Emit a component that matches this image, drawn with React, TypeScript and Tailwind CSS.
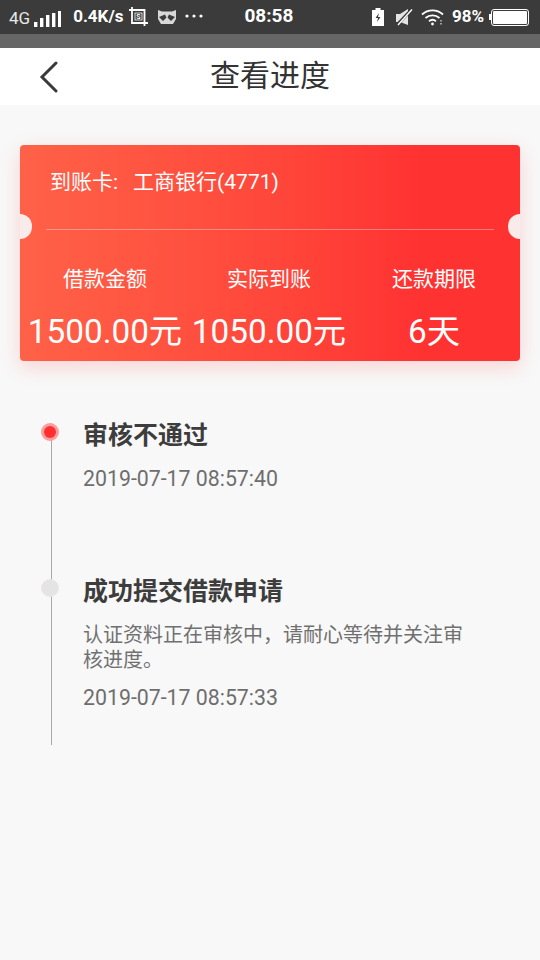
import React from 'react';

function SignalBars() {
    return (
        <svg width="27" height="18" viewBox="0 0 27 18" fill="white">
            <rect x="0" y="13" width="3.4" height="5" />
            <rect x="6" y="9" width="3.4" height="9" />
            <rect x="12" y="6" width="3.4" height="12" />
            <rect x="18" y="4" width="3.4" height="14" />
            <rect x="24" y="2" width="3.4" height="16" />
        </svg>
    );
}

function ScreenshotIcon() {
    return (
        <svg width="19" height="20" viewBox="0 0 19 20" fill="none" stroke="white" strokeWidth="1.8">
            <path d="M3 0v16h16M0 3h15.5v16" />
            <rect x="6" y="6" width="7" height="7" strokeWidth="0.8" />
            <text x="9.5" y="12" fontSize="7" fontWeight="700" fill="white" stroke="none" textAnchor="middle">S</text>
        </svg>
    );
}

function RaccoonIcon() {
    return (
        <svg width="18" height="16" viewBox="0 0 18 16" fill="#d8d8d8">
            <path d="M0 1l4 1.5h10L18 1v9l-3 5H3l-3-5z" />
            <path d="M1 8l6-2.5 1.5 3L5 12zM17 8l-6-2.5-1.5 3L13 12z" fill="#3b3b3b" />
        </svg>
    );
}

function Dots() {
    return (
        <svg width="18" height="4" viewBox="0 0 18 4" fill="white">
            <circle cx="2" cy="2" r="1.6" />
            <circle cx="9" cy="2" r="1.6" />
            <circle cx="16" cy="2" r="1.6" />
        </svg>
    );
}

function BatteryCharging() {
    return (
        <svg width="12" height="18" viewBox="0 0 12 18">
            <path d="M3.5 0h5v2H12v16H0V2h3.5z" fill="white" />
            <path d="M7 5l-3.5 5H6l-1 4 3.5-5H6z" fill="#3b3b3b" />
        </svg>
    );
}

function MutedIcon() {
    return (
        <svg width="17" height="18" viewBox="0 0 17 18">
            <path d="M0 6h4l8-5v16l-8-3H0z" fill="#e4e4e4" />
            <path d="M1 17L16 1" stroke="#3b3b3b" strokeWidth="3" />
            <path d="M2 17L16 1.5" stroke="white" strokeWidth="1.4" />
        </svg>
    );
}

function WifiIcon() {
    return (
        <svg width="24" height="18" viewBox="0 0 24 18" fill="none" stroke="white" strokeWidth="1.8">
            <path d="M1 6.5C7 1 16 1 22 6.5" />
            <path d="M4.5 10C8.5 6.5 14.5 6.5 18.5 10" />
            <path d="M8 13.2c2-1.6 5-1.6 7 0" />
            <circle cx="11.5" cy="16" r="1.4" fill="white" stroke="none" />
            <path d="M20 12v1.5M20 15v1.5" strokeWidth="1.4" stroke="#cccccc" />
        </svg>
    );
}

function StatusBar() {
    return (
        <div className="h-[34px] bg-[#3b3b3b] flex items-center text-white pl-[9px] pr-[12px]">
            <span className="text-[17px] text-[#e8e8e8] mt-[3px]">4G</span>
            <span className="ml-[4px] mt-[1px] flex"><SignalBars /></span>
            <span className="ml-[12px] text-[17px] font-bold -mt-[1px]">0.4K/s</span>
            <span className="ml-[6px] flex -mt-[1px]"><ScreenshotIcon /></span>
            <span className="ml-[10px] flex"><RaccoonIcon /></span>
            <span className="ml-[9px] flex -mt-[3px]"><Dots /></span>
            <span className="ml-[41px] text-[19px] font-bold -mt-[1px]">08:58</span>
            <span className="ml-auto flex"><BatteryCharging /></span>
            <span className="ml-[12px] flex"><MutedIcon /></span>
            <span className="ml-[8px] flex"><WifiIcon /></span>
            <span className="ml-[7px] text-[17px] font-bold -mt-[1px]">98%</span>
            <span className="ml-[5px] flex items-center">
                <span className="w-[2px] h-[6px] bg-white" />
                <span className="ml-[1px] w-[36px] h-[15px] bg-white rounded-[2px] border border-[#3b3b3b] outline outline-1 outline-white" />
            </span>
        </div>
    );
}

function Stat({ label, value, className }: { label: string; value: string; className: string }) {
    return (
        <div className={`flex flex-col items-center whitespace-nowrap ${className}`}>
            <span className="text-[21px] leading-[28px]">{label}</span>
            <span className="text-[33.3px] leading-[40px] mt-[19px]">{value}</span>
        </div>
    );
}

function TimelineItem({ active, title, desc, time, height }: { active?: boolean; title: string; desc?: string; time: string; height: string }) {
    return (
        <div className={`flex ${height}`}>
            <div className="w-[18px] flex flex-col items-center relative">
                <div className={`absolute top-0 z-10 w-[18px] h-[18px] rounded-full flex items-center justify-center ${active ? 'bg-[#ff9d9d]' : 'bg-[#e4e4e4] border border-[#efe6e6]'}`}>
                    {active && <div className="w-[12px] h-[12px] rounded-full bg-[#ff3030]" />}
                </div>
                <div className="ml-[2px] w-px flex-1 bg-[#a8a8a8]" />
            </div>
            <div className="ml-[24px] flex-1 pr-[67px]">
                <div className="text-[25px] leading-[26px] font-bold text-[#3d3d3d]">{title}</div>
                {desc && <div className="mt-[18px] text-[20px] leading-[25px] text-[#707070]">{desc}</div>}
                <div className={`${desc ? 'mt-[12px]' : 'mt-[17px]'} text-[21.3px] leading-[26px] text-[#6e6e6e]`}>{time}</div>
            </div>
        </div>
    );
}

export default function App() {
    return (
        <div className="min-h-screen bg-[#f8f8f8] font-['Roboto','Noto_Sans_CJK_SC',sans-serif]">
            <StatusBar />
            <div className="h-[14px] bg-[#666666]" />

            <header className="h-[57px] bg-white relative flex items-center justify-center">
                <svg width="20" height="32" viewBox="0 0 20 32" fill="none" stroke="#3a3a3a" strokeWidth="3" strokeLinecap="round" className="absolute left-[39px] top-[13px]">
                    <path d="M17 2L3 16l14 14" />
                </svg>
                <h1 className="text-[30px] text-[#333333] -mt-[2px]">查看进度</h1>
            </header>

            <section className="mt-[40px] mx-[20px] h-[216px] relative rounded-[4px] bg-gradient-to-r from-[#ff6148] to-[#ff3232] to-80% text-white shadow-[0_6px_20px_rgba(255,60,60,0.2)]">
                <span className="absolute left-0 top-[69px] w-[12px] h-[25px] rounded-r-full bg-[#f8ebe9]" />
                <span className="absolute right-0 top-[69px] w-[12px] h-[25px] rounded-l-full bg-[#f8ebe9]" />

                <div className="h-[85px] mx-[26px] pl-[4px] pt-[22px] border-b border-white/35 text-[21px] leading-[30px] flex items-start">
                    <span>到账卡:</span>
                    <span className="ml-[15px]">工商银行(4771)</span>
                </div>
                <div className="flex pt-[35px]">
                    <Stat label="借款金额" value="1500.00元" className="w-[170px]" />
                    <Stat label="实际到账" value="1050.00元" className="w-[158px]" />
                    <Stat label="还款期限" value="6天" className="w-[172px]" />
                </div>
            </section>

            <section className="mt-[62px] ml-[41px]">
                <TimelineItem active title="审核不通过" time="2019-07-17 08:57:40" height="h-[156px]" />
                <TimelineItem title="成功提交借款申请" desc="认证资料正在审核中，请耐心等待并关注审核进度。" time="2019-07-17 08:57:33" height="h-[166px]" />
            </section>
        </div>
    );
}
